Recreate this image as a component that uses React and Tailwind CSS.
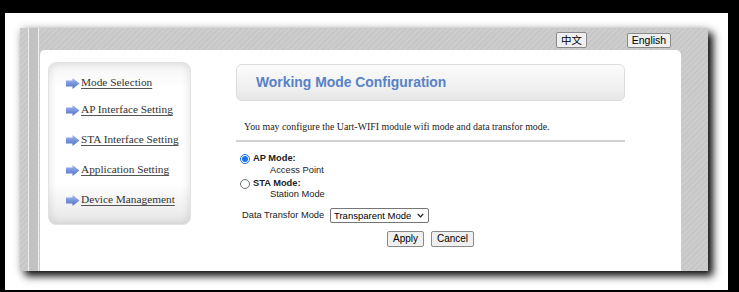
import React from 'react';

const LINKS = [
  'Mode Selection',
  'AP Interface Setting',
  'STA Interface Setting',
  'Application Setting',
  'Device Management',
];

// gaps between the sidebar rows, top to bottom
const LINK_GAPS = ['mt-[14px]', 'mt-[15px]', 'mt-[18px]', 'mt-[18px]', 'mt-[18px]'];

function Arrow() {
  return (
    <svg width="14" height="11" viewBox="0 0 14 11" className="shrink-0">
      <defs>
        <linearGradient id="arr" x1="0" y1="0" x2="0" y2="1">
          <stop offset="0" stopColor="#a3baf0" />
          <stop offset="1" stopColor="#4d70c6" />
        </linearGradient>
      </defs>
      <polygon points="0,2.5 6.5,2.5 6.5,0 13.5,5.5 6.5,11 6.5,8.5 0,8.5" fill="url(#arr)" />
    </svg>
  );
}

function Radio({ checked }) {
  return checked ? (
    <span className="w-[10px] h-[10px] rounded-full border border-[#1a73e8] bg-white flex items-center justify-center shrink-0">
      <span className="w-[6px] h-[6px] rounded-full bg-[#1a73e8]" />
    </span>
  ) : (
    <span className="w-[10px] h-[10px] rounded-full border border-[#6f6f6f] bg-white shrink-0" />
  );
}

const stripes =
  'bg-[repeating-linear-gradient(135deg,#c7c7c7_0px,#c7c7c7_2px,#cdcdcd_2px,#cdcdcd_4px)]';

export default function App() {
  return (
    <div className="w-[739px] h-[292px] bg-black pt-[13px] pl-[5px] overflow-hidden font-['Liberation_Sans',Arial,sans-serif]">
      <div className="w-[723px] h-[277px] bg-white pt-[15px] pl-[15px]">
        {/* gray frame */}
        <div
          className={`w-[688px] h-[243px] flex ${stripes} shadow-[5px_5px_8px_rgba(0,0,0,0.95),0_0_8px_rgba(0,0,0,0.18)]`}
        >
          {/* left rails */}
          <div className="flex h-full">
            <div className="w-[8px]" />
            <div className="w-[1px] bg-[#eeeeee]" />
            <div className="w-[9px] bg-[#c2c2c2]" />
            <div className="w-[1px] bg-[#eeeeee]" />
            <div className="w-[1px]" />
          </div>

          <div className="flex flex-col w-[641px]">
            {/* language bar */}
            <div className="h-[22px] flex items-start pt-[4px]">
              <button className="ml-[516px] h-[16px] w-[31px] bg-[#efefef] border border-[#8a8a8a] rounded-[2px] text-[10.5px] leading-none text-black font-['Noto_Sans_CJK_SC',sans-serif]">
                中文
              </button>
              <button className="ml-[40px] mt-[1px] h-[15px] w-[44px] bg-[#efefef] border border-[#8a8a8a] rounded-[2px] text-[10.5px] leading-none text-black">
                English
              </button>
            </div>

            {/* white content panel */}
            <div className="flex-1 bg-white rounded-t-[5px] flex pl-[8px] pt-[12px]">
              {/* sidebar */}
              <div className="w-[143px] h-[163px] rounded-[8px] border border-[#e2e2e2] bg-[linear-gradient(180deg,#f4f4f4_0%,#ffffff_15%,#ffffff_75%,#e6e6e6_100%)] shadow-[inset_0_0_10px_rgba(0,0,0,0.12)] pl-[17px] flex flex-col">
                {LINKS.map((l, i) => (
                  <div key={l} className={`flex items-center gap-[1px] h-[12px] ${LINK_GAPS[i]}`}>
                    <Arrow />
                    <span className="font-['Liberation_Serif',serif] text-[11.3px] leading-none text-[#333333] underline underline-offset-[2px] decoration-[#555]">
                      {l}
                    </span>
                  </div>
                ))}
              </div>

              {/* main column */}
              <div className="ml-[45px] mt-[2px] w-[389px] flex flex-col">
                <div className="h-[37px] rounded-[6px] border border-[#dcdcdc] bg-[linear-gradient(180deg,#fbfbfb_0%,#f1f1f1_60%,#e6e6e6_100%)] flex items-center pl-[19px]">
                  <span className="text-[13.9px] font-bold text-[#5882c6] leading-none">
                    Working Mode Configuration
                  </span>
                </div>

                <div className="mt-[20px] pl-[8px] h-[12px] font-['Liberation_Serif',serif] text-[9.9px] leading-[12px] text-[#222]">
                  You may configure the Uart-WIFI module wifi mode and data transfor mode.
                </div>

                <div className="mt-[7px] h-[2px] bg-[#d2d2d2]" />

                <div className="pl-[4px] flex flex-col text-[9.3px] text-[#222]">
                  <div className="mt-[11px] h-[11px] flex items-center gap-[3px]">
                    <Radio checked />
                    <span className="font-bold leading-none">AP Mode:</span>
                  </div>
                  <div className="pl-[30px] h-[11px] leading-[11px] mt-[1px]">Access Point</div>
                  <div className="mt-[2px] h-[11px] flex items-center gap-[3px]">
                    <Radio />
                    <span className="font-bold leading-none">STA Mode:</span>
                  </div>
                  <div className="pl-[30px] h-[11px] leading-[11px]">Station Mode</div>

                  <div className="mt-[8px] h-[15px] flex items-center pl-[2px]">
                    <span className="w-[88px] leading-none">Data Transfor Mode</span>
                    <div className="h-[15px] w-[99px] border border-[#767676] rounded-[2px] bg-white flex items-center pl-[3px] pr-[4px] justify-between">
                      <span className="text-[9.5px] leading-none text-black">Transparent Mode</span>
                      <svg width="7" height="5" viewBox="0 0 7 5">
                        <path d="M0.7 0.8 L3.5 3.8 L6.3 0.8" fill="none" stroke="#111" strokeWidth="1.2" />
                      </svg>
                    </div>
                  </div>
                </div>

                <div className="mt-[8px] pl-[151px] flex gap-[7px]">
                  <button className="h-[16px] w-[37px] bg-[#efefef] border border-[#8a8a8a] rounded-[2px] text-[10px] leading-none text-black">
                    Apply
                  </button>
                  <button className="h-[16px] w-[43px] bg-[#efefef] border border-[#8a8a8a] rounded-[2px] text-[10px] leading-none text-black">
                    Cancel
                  </button>
                </div>
              </div>
            </div>
          </div>
        </div>
      </div>
    </div>
  );
}
